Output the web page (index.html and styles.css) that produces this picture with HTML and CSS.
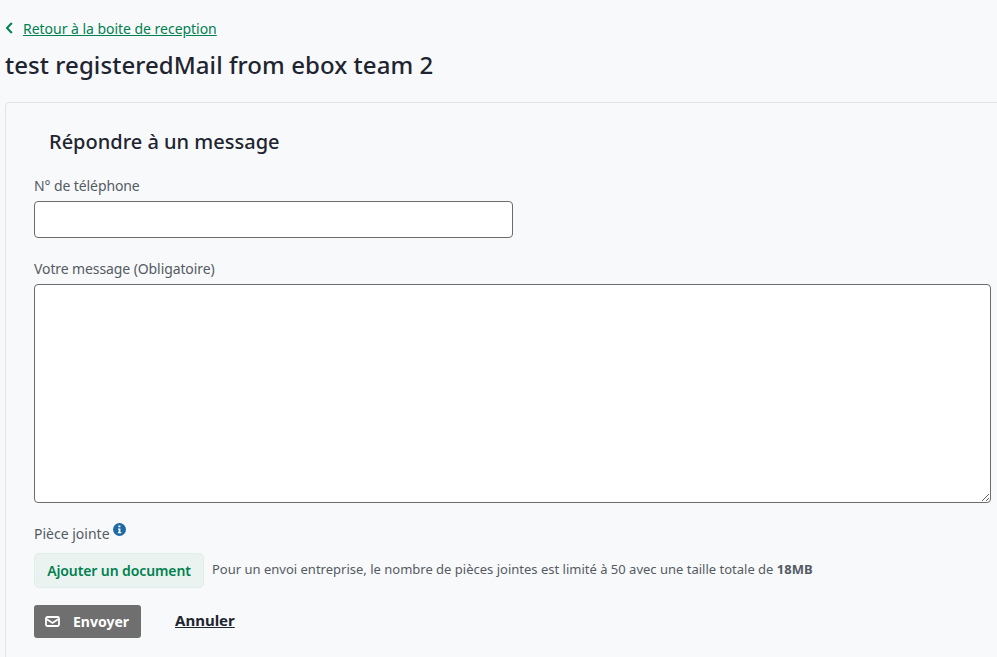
FILE: index.html
```html
<!DOCTYPE html>
<html lang="fr">
<head>
    <meta charset="UTF-8">
    <title>Répondre à un message</title>
    <link rel="stylesheet" href="styles.css">
</head>
<body>
    <div class="page">
        <a class="back-link" href="#">
            <svg class="back-icon" viewBox="0 0 8 12" width="8" height="12"><path d="M6.8 1 2 6l4.8 5" fill="none" stroke="#00804f" stroke-width="2"/></svg>
            <span>Retour à la boite de reception</span>
        </a>
        <h1>test registeredMail from ebox team 2</h1>

        <div class="card">
            <h2>Répondre à un message</h2>
            <form>
                <div class="field phone-field">
                    <label for="phone">N° de téléphone</label>
                    <input type="text" id="phone">
                </div>
                <div class="field message-field">
                    <label for="message">Votre message (Obligatoire)</label>
                    <textarea id="message"></textarea>
                </div>
                <div class="attach-label">
                    <span>Pièce jointe</span>
                    <svg class="info-icon" viewBox="0 0 13 13" width="13" height="13">
                        <circle cx="6.5" cy="6.5" r="6.5" fill="#1f6aa5"/>
                        <path d="M5.4 2.6h2v1.7h-2zM5 5.4h2.4v3.6h.8v1.2H4.9V9h.8V6.6H5z" fill="#fff"/>
                    </svg>
                </div>
                <div class="attach-row">
                    <button type="button" class="add-btn">Ajouter un document</button>
                    <p class="attach-note">Pour un envoi entreprise, le nombre de pièces jointes est limité à 50 avec une taille totale de <strong>18MB</strong></p>
                </div>
                <div class="actions">
                    <button type="submit" class="send-btn">
                        <svg viewBox="0 0 15 11" width="15" height="11"><rect x="1" y="1" width="13" height="9" rx="1.5" fill="none" stroke="#fff" stroke-width="1.8"/><path d="M1.5 3 7.5 7l6-4" fill="none" stroke="#fff" stroke-width="1.8"/></svg>
                        <span>Envoyer</span>
                    </button>
                    <a class="cancel-link" href="#">Annuler</a>
                </div>
            </form>
        </div>
    </div>
</body>
</html>
```

FILE: styles.css
```css
* {
    margin: 0;
    padding: 0;
    box-sizing: border-box;
}

html, body {
    height: 657px;
    overflow: hidden;
}

body {
    font-family: "Noto Sans", sans-serif;
    background-color: #f8f9fb;
    color: #1e2530;
}

.page {
    padding: 18px 0 0 5px;
}

.back-link {
    display: flex;
    align-items: center;
    gap: 10px;
    height: 20px;
    color: #00804f;
    font-size: 14px;
    letter-spacing: -0.03px;
}

.back-icon {
    flex: none;
}

h1 {
    margin-top: 10px;
    font-size: 24px;
    line-height: 34px;
    font-weight: 500;
    letter-spacing: 0.06px;
}

.card {
    width: 1010px;
    height: 580px;
    margin-top: 20px;
    padding: 23px 0 0 28px;
    border: 1px solid #e1e3e6;
    border-radius: 4px;
    background-color: #f8f9fb;
}

h2 {
    margin-left: 15px;
    font-size: 20px;
    line-height: 32px;
    font-weight: 500;
}

.field label,
.attach-label span {
    color: #555b63;
    font-size: 14px;
    line-height: 20px;
}

.field label {
    display: block;
    margin-bottom: 5px;
    letter-spacing: -0.1px;
}

.phone-field {
    margin-top: 18px;
}

.phone-field input {
    display: block;
    width: 479px;
    height: 37px;
    border: 1px solid #6b6b6b;
    border-radius: 4px;
    background-color: #fff;
}

.message-field {
    margin-top: 21px;
}

.message-field textarea {
    display: block;
    width: 957px;
    height: 219px;
    border: 1px solid #6b6b6b;
    border-radius: 4px;
    background-color: #fff;
}

.attach-label {
    display: flex;
    align-items: flex-start;
    gap: 3px;
    margin-top: 21px;
    height: 20px;
}

.info-icon {
    margin-top: -1px;
}

.attach-row {
    display: flex;
    align-items: center;
    gap: 8px;
    margin-top: 9px;
}

.add-btn {
    width: 170px;
    height: 35px;
    border: 1px solid #dfeee8;
    border-radius: 5px;
    background-color: #eaf3f0;
    color: #00804f;
    font-family: inherit;
    font-size: 14px;
    font-weight: 600;
    letter-spacing: -0.1px;
}

.attach-note {
    color: #555b63;
    font-size: 13px;
    line-height: 18px;
    margin-top: -4px;
}

.attach-note strong {
    font-weight: 700;
}

.actions {
    display: flex;
    align-items: center;
    gap: 34px;
    margin-top: 17px;
}

.send-btn {
    display: flex;
    align-items: center;
    gap: 13px;
    width: 107px;
    height: 33px;
    padding-left: 11px;
    border: none;
    border-radius: 3px;
    background-color: #6f6f6f;
    color: #fff;
    font-family: inherit;
    font-size: 14px;
    font-weight: 700;
}

.cancel-link {
    color: #1e2530;
    font-size: 15px;
    font-weight: 700;
    margin-top: -4px;
}
```
